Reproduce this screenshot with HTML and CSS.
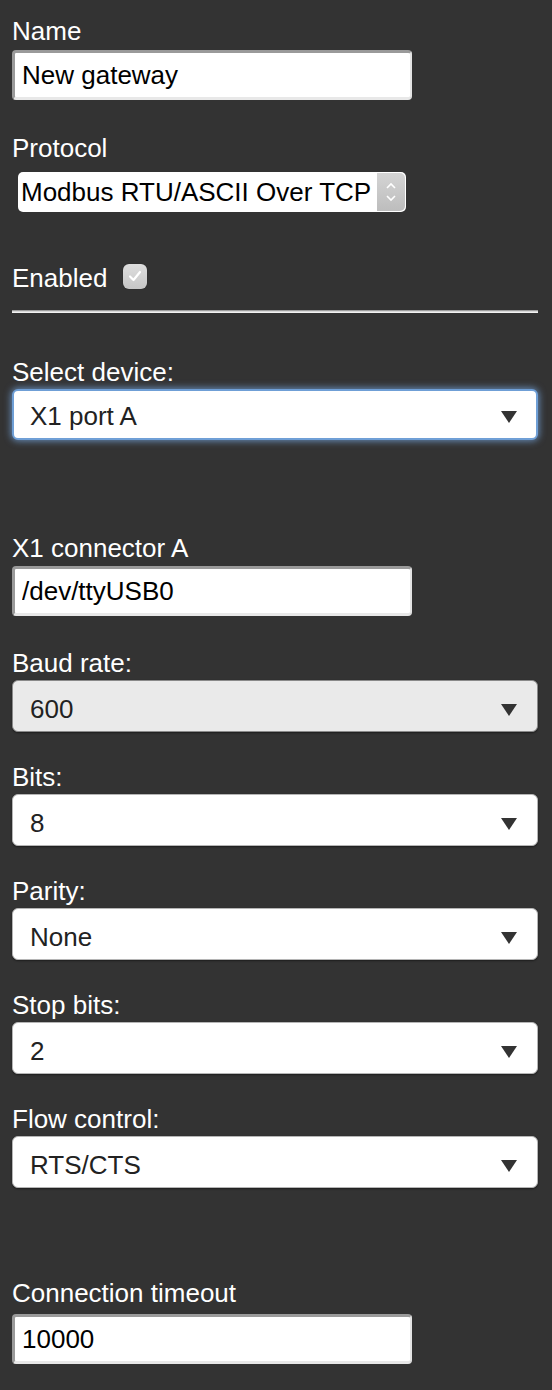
FILE: index.html
```html
<!DOCTYPE html>
<html>
<head>
<meta charset="utf-8">
<link rel="stylesheet" href="styles.css">
</head>
<body>
<div class="form">
  <label class="lbl lbl-name">Name</label>
  <input class="txt txt-name" type="text" value="New gateway">

  <label class="lbl lbl-protocol">Protocol</label>
  <div class="mac-select">
    <span class="mac-value">Modbus RTU/ASCII Over TCP</span>
    <span class="mac-spin">
      <svg width="14" height="26" viewBox="0 0 14 26"><path d="M3 9 L7 5 L11 9" fill="none" stroke="#fff" stroke-width="1.6"/><path d="M3 17 L7 21 L11 17" fill="none" stroke="#fff" stroke-width="1.6"/></svg>
    </span>
  </div>

  <div class="enabled-row">
    <span class="lbl-inline">Enabled</span>
    <span class="check">
      <svg width="16" height="14" viewBox="0 0 16 14"><path d="M3 7.5 L6.5 11 L13 3" fill="none" stroke="#fff" stroke-width="2.2" stroke-linecap="round" stroke-linejoin="round"/></svg>
    </span>
  </div>

  <div class="rule"></div>

  <label class="lbl lbl-device">Select device:</label>
  <div class="sel sel-focus"><span>X1 port A</span><svg class="arrow" width="16" height="12" viewBox="0 0 16 12"><path d="M0 0 H16 L8 12 Z" fill="#333"/></svg></div>

  <label class="lbl lbl-connector">X1 connector A</label>
  <input class="txt txt-connector" type="text" value="/dev/ttyUSB0">

  <label class="lbl lbl-sel">Baud rate:</label>
  <div class="sel sel-disabled"><span>600</span><svg class="arrow" width="16" height="12" viewBox="0 0 16 12"><path d="M0 0 H16 L8 12 Z" fill="#333"/></svg></div>

  <label class="lbl lbl-sel">Bits:</label>
  <div class="sel"><span>8</span><svg class="arrow" width="16" height="12" viewBox="0 0 16 12"><path d="M0 0 H16 L8 12 Z" fill="#333"/></svg></div>

  <label class="lbl lbl-sel">Parity:</label>
  <div class="sel"><span>None</span><svg class="arrow" width="16" height="12" viewBox="0 0 16 12"><path d="M0 0 H16 L8 12 Z" fill="#333"/></svg></div>

  <label class="lbl lbl-sel">Stop bits:</label>
  <div class="sel"><span>2</span><svg class="arrow" width="16" height="12" viewBox="0 0 16 12"><path d="M0 0 H16 L8 12 Z" fill="#333"/></svg></div>

  <label class="lbl lbl-sel">Flow control:</label>
  <div class="sel sel-last"><span>RTS/CTS</span><svg class="arrow" width="16" height="12" viewBox="0 0 16 12"><path d="M0 0 H16 L8 12 Z" fill="#333"/></svg></div>

  <label class="lbl lbl-timeout">Connection timeout</label>
  <input class="txt txt-timeout" type="text" value="10000">
</div>
</body>
</html>
```
FILE: styles.css
```css
html, body {
  margin: 0;
  padding: 0;
  background: #333333;
  height: 100%;
}
body {
  font-family: "Liberation Sans", Arial, sans-serif;
  color: #ffffff;
}
.form {
  padding: 16px 14px 0 12px;
  display: flex;
  flex-direction: column;
  align-items: stretch;
}
.lbl {
  display: block;
  font-size: 26px;
  line-height: 30px;
  color: #ffffff;
}
.lbl-name { margin-bottom: 4px; }
.lbl-protocol { margin-bottom: 9px; }
.lbl-device { margin-bottom: 2px; }
.lbl-connector { margin-bottom: 3px; }
.lbl-sel { margin-bottom: 2px; }
.lbl-timeout { margin-bottom: 6px; }

.txt {
  box-sizing: border-box;
  width: 400px;
  height: 50px;
  margin: 0;
  padding: 0 0 0 7px;
  font-family: "Liberation Sans", Arial, sans-serif;
  font-size: 26px;
  color: #000000;
  background: #ffffff;
  border-style: solid;
  border-width: 3px 2px 3px 3px;
  border-color: #9a9a9a #e4e4e4 #e8e8e8 #9a9a9a;
  border-radius: 4px;
  outline: none;
}
.txt-name { margin-bottom: 33px; }
.txt-connector { margin-bottom: 32px; }

.mac-select {
  box-sizing: border-box;
  width: 388px;
  height: 40px;
  margin: 0 0 51px 6px;
  background: #ffffff;
  border-radius: 5px;
  display: flex;
  align-items: center;
  overflow: hidden;
}
.mac-value {
  flex: 1;
  padding-left: 3px;
  font-size: 26px;
  color: #000000;
  white-space: nowrap;
  overflow: hidden;
}
.mac-spin {
  width: 28px;
  height: 38px;
  margin-right: 1px;
  background: linear-gradient(#d4d4d4, #bdbdbd);
  border-radius: 0 5px 5px 0;
  display: flex;
  align-items: center;
  justify-content: center;
}

.enabled-row {
  display: flex;
  align-items: center;
  height: 30px;
  margin-bottom: 17px;
}
.lbl-inline {
  font-size: 26px;
  line-height: 30px;
}
.check {
  width: 24px;
  height: 25px;
  margin-left: 16px;
  margin-top: -4px;
  border-radius: 6px;
  background: linear-gradient(#dedede, #c6c6c6);
  box-shadow: 0 0 1px rgba(0,0,0,0.5);
  display: flex;
  align-items: center;
  justify-content: center;
  filter: blur(0.4px);
}

.rule {
  height: 1px;
  border-top: 1px solid #9e9e9e;
  background: #d8d8d8;
  border-bottom: 1px solid #f2f2f2;
  margin-bottom: 44px;
}

.sel {
  box-sizing: border-box;
  height: 52px;
  background: #ffffff;
  border: 1px solid #b5b5b5;
  border-radius: 6px;
  box-shadow: 0 1px 2px rgba(0,0,0,0.45);
  display: flex;
  align-items: center;
  justify-content: space-between;
  padding: 7px 20px 0 17px;
  font-size: 26px;
  color: #222222;
  margin-bottom: 30px;
}
.sel .arrow { flex: none; margin-top: 0; }
.sel-focus {
  height: 51px;
  border: 2px solid #6f9fd6;
  box-shadow: 0 0 7px 1px rgba(120, 170, 230, 0.75);
  margin-bottom: 93px;
  padding-top: 4px;
  padding-left: 16px;
  padding-right: 19px;
}
.sel-disabled {
  background: #eaeaea;
  border-color: #8a8a8a;
}
.sel-last { margin-bottom: 90px; }
```
